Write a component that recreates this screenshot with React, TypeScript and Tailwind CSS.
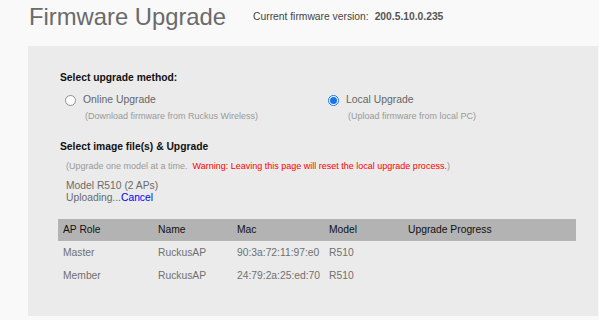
const rows = [
  { role: "Master", name: "RuckusAP", mac: "90:3a:72:11:97:e0", model: "R510" },
  { role: "Member", name: "RuckusAP", mac: "24:79:2a:25:ed:70", model: "R510" },
];

function Radio({ checked }: { checked?: boolean }) {
  return (
    <span
      className={
        checked
          ? "flex h-[11px] w-[11px] items-center justify-center rounded-full border border-[#1a73e8] bg-white"
          : "block h-[11px] w-[11px] rounded-full border border-[#8f8f8f] bg-white"
      }
    >
      {checked && <span className="block h-[7px] w-[7px] rounded-full bg-[#1a73e8]" />}
    </span>
  );
}

function Method({ label, hint, checked }: { label: string; hint: string; checked?: boolean }) {
  return (
    <div>
      <div className="flex items-center gap-[7px] leading-[14px]">
        <Radio checked={checked} />
        <span className="text-[10.4px] text-[#666]">{label}</span>
      </div>
      <div className="mt-[3px] pl-[20px] text-[9px] leading-[12px] text-[#999]">{hint}</div>
    </div>
  );
}

export default function App() {
  return (
    <div
      className="h-[320px] w-[599px] overflow-hidden bg-[#f9f9f9]"
      style={{ fontFamily: '"Liberation Sans", Arial, sans-serif' }}
    >
      <div className="flex h-[46px] items-start pl-[29px]">
        <h1 className="pt-[3px] text-[23.8px] leading-[28px] text-[#6a6a6a]">Firmware Upgrade</h1>
        <div className="ml-[27px] mt-[10px] text-[10.3px] leading-[14px] text-[#444]">
          Current firmware version:
          <span className="ml-[6px] font-bold text-[#555]">200.5.10.0.235</span>
        </div>
      </div>

      <div className="ml-[28px] mr-[1px] h-[270px] bg-[#ebebeb] pl-[30px] pt-[25px]">
        <div className="ml-[2px] text-[10.3px] font-bold leading-[14px] text-[#111]">Select upgrade method:</div>

        <div className="ml-[7px] mt-[8px] grid grid-cols-[263px_1fr]">
          <Method label="Online Upgrade" hint="(Download firmware from Ruckus Wireless)" />
          <Method label="Local Upgrade" hint="(Upload firmware from local PC)" checked />
        </div>

        <div className="ml-[2px] mt-[18px] text-[10.3px] font-bold leading-[14px] text-[#111]">
          Select image file(s) &amp; Upgrade
        </div>

        <div className="ml-[8px] mt-[6px] text-[9px] leading-[12px] text-[#999]">
          (Upgrade one model at a time.
          <span className="ml-[5px] text-[#f00]">Warning: Leaving this page will reset the local upgrade process.</span>)
        </div>

        <div className="ml-[8px] mt-[8px] text-[10.3px] leading-[12px] text-[#6a6a6a]">
          <div>Model R510 (2 APs)</div>
          <div>
            Uploading...<span className="text-[#0000ff]">Cancel</span>
          </div>
        </div>

        <table className="mt-[15px] w-[518px] border-collapse text-[10.3px]">
          <thead>
            <tr className="h-[22px] bg-[#b3b3b3] text-left text-[#111]">
              <th className="w-[100px] pl-[5px] font-normal">AP Role</th>
              <th className="w-[79px] font-normal">Name</th>
              <th className="w-[92px] font-normal">Mac</th>
              <th className="w-[79px] font-normal">Model</th>
              <th className="font-normal">Upgrade Progress</th>
            </tr>
          </thead>
          <tbody className="text-[#707070]">
            {rows.map((r) => (
              <tr key={r.mac} className="h-[23px]">
                <td className="pl-[5px] pt-[1px]">{r.role}</td>
                <td className="pt-[1px]">{r.name}</td>
                <td className="pt-[1px]">{r.mac}</td>
                <td className="pt-[1px]">{r.model}</td>
                <td></td>
              </tr>
            ))}
          </tbody>
        </table>
      </div>
    </div>
  );
}
